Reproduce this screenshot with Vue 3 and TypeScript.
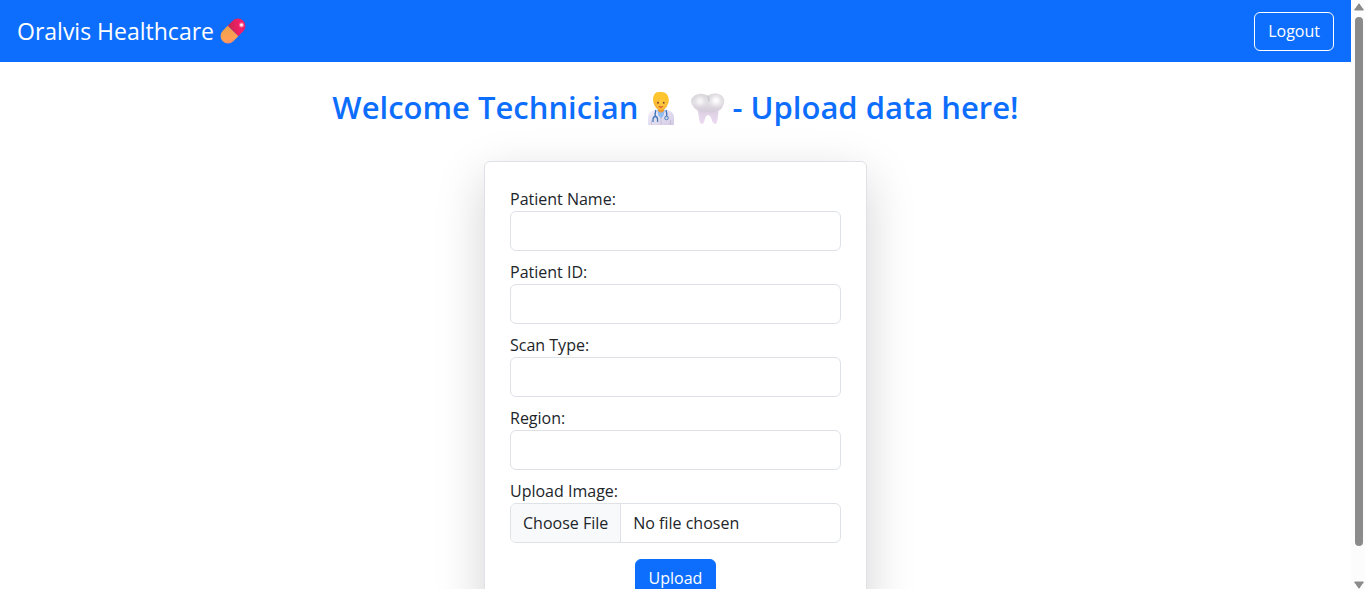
<script setup lang="ts">
import { ref } from 'vue'

interface Field {
  id: string
  label: string
}

const fields: Field[] = [
  { id: 'patient-name', label: 'Patient Name:' },
  { id: 'patient-id', label: 'Patient ID:' },
  { id: 'scan-type', label: 'Scan Type:' },
  { id: 'region', label: 'Region:' },
]

const values = ref<Record<string, string>>({
  'patient-name': '',
  'patient-id': '',
  'scan-type': '',
  region: '',
})
</script>

<template>
  <div class="page">
    <div class="content">
      <nav class="navbar">
        <a class="brand" href="#">
          <span>Oralvis Healthcare</span>
          <svg class="pill" viewBox="0 0 26 26" aria-hidden="true">
            <defs>
              <linearGradient id="pill-red" x1="0" y1="0" x2="1" y2="1">
                <stop offset="0" stop-color="#c5264f" />
                <stop offset="0.55" stop-color="#f01f66" />
                <stop offset="1" stop-color="#dc2372" />
              </linearGradient>
              <linearGradient id="pill-orange" x1="0.6" y1="0" x2="0" y2="1">
                <stop offset="0" stop-color="#efa04c" />
                <stop offset="0.6" stop-color="#ffa057" />
                <stop offset="1" stop-color="#ff7c7c" />
              </linearGradient>
              <radialGradient id="pill-shine">
                <stop offset="0" stop-color="#fff" />
                <stop offset="0.35" stop-color="#ffd0df" />
                <stop offset="1" stop-color="#ff5c8c" stop-opacity="0" />
              </radialGradient>
            </defs>
            <g transform="rotate(-45 13 13)">
              <path d="M13 5.5h7a7.5 7.5 0 0 1 0 15h-7z" fill="url(#pill-red)" />
              <path d="M13 5.5H6a7.5 7.5 0 0 0 0 15h7z" fill="url(#pill-orange)" />
            </g>
            <circle cx="21.5" cy="7" r="3.2" fill="url(#pill-shine)" />
          </svg>
        </a>
        <button class="btn btn-outline" type="button">Logout</button>
      </nav>

      <main class="main">
        <h1 class="title">
          <span>Welcome Technician</span>
          <svg class="doctor" viewBox="0 0 28 34" aria-hidden="true">
            <defs>
              <linearGradient id="coat" x1="0" y1="0" x2="1" y2="1">
                <stop offset="0" stop-color="#f3f0fa" />
                <stop offset="1" stop-color="#d3cae4" />
              </linearGradient>
              <radialGradient id="face" cx="0.6" cy="0.35" r="0.7">
                <stop offset="0" stop-color="#ffcf3f" />
                <stop offset="1" stop-color="#fbb034" />
              </radialGradient>
            </defs>
            <path d="M1 34v-7c0-5 3-7.500 7-8h12c4 .5 7 3 7 8v7z" fill="url(#coat)" />
            <path d="M10 18.500h8l-1.500 6-2.500 3-2.500-3z" fill="#8fbcf2" />
            <path d="M11 16h6v4q-3 3-6 0z" fill="#ee9a33" />
            <path d="M6.500 12C5.500 5 7 1 13 1s9.500 3 8.500 11l-2 3H8z" fill="#ffbd28" />
            <path d="M7.500 9.500c2-.5 3.500-1.500 4.500-3 2 2 5 3 8.500 3v3c0 4-3 6.500-6.500 6.500s-6.500-2.500-6.500-6.500z" fill="url(#face)" />
            <path d="M6.500 10.500C6 4 8 1 13 1s9 3 8.500 9.500c-4 0-7.500-1.500-9.500-4-1.500 2.500-3 3.500-5.500 4z" fill="#ffc52e" />
            <circle cx="11" cy="11.800" r="1" fill="#7a4b30" />
            <circle cx="16.700" cy="11.800" r="1" fill="#7a4b30" />
            <path d="M12.300 15.600q1.500 1 3 0" fill="none" stroke="#d0452f" stroke-width="1.100" stroke-linecap="round" />
            <path d="M8.800 19q-1 4-.5 6.500M19 19q1.300 4 .5 7" fill="none" stroke="#386fb8" stroke-width="1.300" />
            <path d="M6 31v-2q0-3.500 2.300-3.500t2.300 3.500v2" fill="none" stroke="#477bbd" stroke-width="1.300" />
            <path d="M14 27v7M4.500 29v5M23.500 29v5" stroke="#b9aecf" stroke-width=".6" />
            <circle cx="19.500" cy="27" r="1.800" fill="#c7d5e6" stroke="#477bbd" stroke-width=".9" />
          </svg>
          <svg class="tooth" viewBox="0 0 36 32" aria-hidden="true">
            <defs>
              <linearGradient id="enamel" x1="0" y1="0" x2="0" y2="1">
                <stop offset="0" stop-color="#d9d6da" />
                <stop offset="0.5" stop-color="#e2dee4" />
                <stop offset="1" stop-color="#d3c9d8" />
              </linearGradient>
              <radialGradient id="bulb">
                <stop offset="0" stop-color="#fff" />
                <stop offset="0.3" stop-color="#fbfafb" stop-opacity=".9" />
                <stop offset="1" stop-color="#e9e6ea" stop-opacity="0" />
              </radialGradient>
              <linearGradient id="root" x1="0" y1="0" x2="0" y2="1">
                <stop offset="0" stop-color="#d9cddd" />
                <stop offset="1" stop-color="#ecdaf3" />
              </linearGradient>
            </defs>
            <path d="M6 15h24c-3 4-1 17-5 17-3.500 0-3-9-7-9s-2.500 9-6 9C8 32 10 20 6 15z" fill="url(#root)" />
            <path d="M9 2c4-1 6 .5 9 1.500C21 2 24 1 28 2c5 1 7 5 6 9-1 5-4 8-8 8-3 2-5 2-8 1-3 1-6 0-8-1-5-1-8-5-9-9-.500-4 3-7 8-8z" fill="url(#enamel)" />
            <circle cx="26" cy="8.500" r="8" fill="url(#bulb)" />
            <circle cx="10" cy="9" r="7" fill="url(#bulb)" opacity=".8" />
            <path d="M17.500 4q2 1 1.500 5" fill="none" stroke="#b5adb7" stroke-width="1" stroke-linecap="round" opacity=".6" />
          </svg>
          <span>- Upload data here!</span>
        </h1>

        <form class="card" @submit.prevent>
          <div v-for="field in fields" :key="field.id" class="field">
            <label :for="field.id">{{ field.label }}</label>
            <input :id="field.id" v-model="values[field.id]" class="control" type="text" />
          </div>
          <div class="field">
            <label for="scan-image">Upload Image:</label>
            <input id="scan-image" class="control file" type="file" />
          </div>
          <button class="btn btn-primary" type="submit">Upload</button>
        </form>
      </main>
    </div>

    <div class="scrollbar" aria-hidden="true">
      <svg class="arrow" viewBox="0 0 10 8"><path d="M5 .8L9.400 7H.6z" fill="#8b8b8b" stroke="#8b8b8b" stroke-linejoin="round" /></svg>
      <div class="track"><div class="thumb"></div></div>
      <svg class="arrow" viewBox="0 0 10 8"><path d="M5 7.200L.6 1h8.800z" fill="#8b8b8b" stroke="#8b8b8b" stroke-linejoin="round" /></svg>
    </div>
  </div>
</template>

<style>
body {
  margin: 0;
  background: #fff;
}
</style>

<style scoped>
.page {
  display: flex;
  height: 100vh;
  overflow: hidden;
  font-family: "Segoe UI", "Open Sans", "Noto Sans", sans-serif;
  font-size: 16px;
  line-height: 25px;
  color: #212529;
}

.page * {
  box-sizing: border-box;
}

.content {
  flex: 1;
  min-width: 0;
  overflow: hidden;
}

.navbar {
  display: flex;
  align-items: center;
  justify-content: space-between;
  height: 62px;
  padding: 0 17px;
  background: #0d6efd;
}

.brand {
  display: flex;
  align-items: center;
  gap: 6px;
  color: #fff;
  font-size: 23px;
  line-height: 36px;
  text-decoration: none;
}

.pill {
  width: 26px;
  height: 26px;
}

.btn {
  padding: 6px 13px;
  border: 1px solid #0d6efd;
  border-radius: 6px;
  color: #fff;
  font: inherit;
  cursor: pointer;
}

.btn-outline {
  border-color: #fff;
  background: transparent;
}

.btn-primary {
  align-self: center;
  margin-top: 6px;
  background: #0d6efd;
}

.main {
  display: flex;
  flex-direction: column;
  align-items: center;
  padding: 25px 16px;
}

.title {
  display: flex;
  align-items: center;
  margin: 0 0 33px;
  color: #0d6efd;
  font-size: 31px;
  font-weight: 600;
  line-height: 41px;
}

.doctor {
  width: 28px;
  height: 34px;
  margin: 0 15px 0 9px;
}

.tooth {
  width: 36px;
  height: 32px;
  margin-right: 6px;
}

.card {
  display: flex;
  flex-direction: column;
  width: 100%;
  max-width: 383px;
  padding: 26px 25px;
  border: 1px solid #dee2e6;
  border-radius: 6px;
  background: #fff;
  box-shadow: 0 16px 49px rgba(0, 0, 0, 0.175);
}

.field {
  display: flex;
  flex-direction: column;
  margin-bottom: 10px;
  line-height: 23px;
}

.control {
  width: 100%;
  height: 40px;
  padding: 6px 12px;
  border: 1px solid #dee2e6;
  border-radius: 6px;
  background: #fff;
  color: #212529;
  font: inherit;
}

.file {
  overflow: hidden;
  line-height: 25px;
}

.file::file-selector-button {
  margin: -6px 12px -6px -12px;
  padding: 6px 12px;
  border: 0 solid #dee2e6;
  border-right-width: 1px;
  border-radius: 0;
  background: #f8f9fa;
  color: #212529;
  font: inherit;
  line-height: 26px;
}

.scrollbar {
  display: flex;
  flex-direction: column;
  align-items: center;
  width: 14px;
  padding: 3px 0 0;
  background: #fcfcfc;
}

.arrow {
  width: 10px;
  height: 8px;
  margin-left: 2px;
}

.track {
  flex: 1;
  display: flex;
  padding: 6px 0 35px;
  margin-left: 1px;
}

.thumb {
  width: 8px;
  border-radius: 4px;
  background: #8b8b8b;
}
</style>
